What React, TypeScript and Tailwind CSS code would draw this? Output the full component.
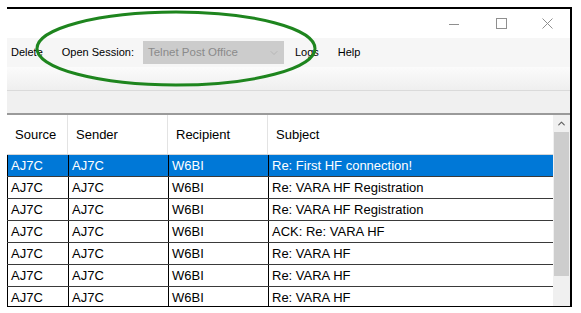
import React from 'react';
import { ChevronDown, ChevronUp } from 'lucide-react';

const rows = [
  { source: 'AJ7C', sender: 'AJ7C', recipient: 'W6BI', subject: 'Re: First HF connection!', selected: true },
  { source: 'AJ7C', sender: 'AJ7C', recipient: 'W6BI', subject: 'Re: VARA HF Registration' },
  { source: 'AJ7C', sender: 'AJ7C', recipient: 'W6BI', subject: 'Re: VARA HF Registration' },
  { source: 'AJ7C', sender: 'AJ7C', recipient: 'W6BI', subject: 'ACK: Re: VARA HF' },
  { source: 'AJ7C', sender: 'AJ7C', recipient: 'W6BI', subject: 'Re: VARA HF' },
  { source: 'AJ7C', sender: 'AJ7C', recipient: 'W6BI', subject: 'Re: VARA HF' },
  { source: 'AJ7C', sender: 'AJ7C', recipient: 'W6BI', subject: 'Re: VARA HF' },
];

const cols = ['w-[61px]', 'w-[100px]', 'w-[100px]', 'w-[285px]'];

export default function App() {
  return (
    <div className="relative w-[581px] h-[313px] bg-white overflow-hidden font-['Liberation_Sans',Arial,sans-serif]">
      <div className="ml-[7px] mt-[7px] w-[565px] h-[300px] border-t-2 border-r-2 border-b border-black flex flex-col">
        {/* title bar */}
        <div className="h-[29px] shrink-0 bg-white flex items-center justify-end">
          <div className="w-[10px] h-px bg-[#8f8f8f] mr-[37px] mt-[1px]" />
          <div className="w-[11px] h-[11px] border border-[#8f8f8f] mr-[35px]" />
          <svg width="11" height="11" viewBox="0 0 11 11" className="mr-[17px]">
            <path d="M0.5 0.5 L10.5 10.5 M10.5 0.5 L0.5 10.5" stroke="#8f8f8f" strokeWidth="1" />
          </svg>
        </div>

        {/* menu bar */}
        <div className="h-[29px] shrink-0 bg-[#f6f6f6] flex items-center text-[11px] text-black">
          <span className="ml-[4px]">Delete</span>
          <span className="ml-[19px]">Open Session:</span>
          <div className="ml-[9px] w-[141px] h-[23px] bg-[#cccccc] flex items-center justify-between pl-[5px] pr-[4px] text-[#8a8a8a] text-[11.5px]">
            <span>Telnet Post Office</span>
            <ChevronDown size={12} strokeWidth={1.25} className="text-[#a9a9a9]" />
          </div>
          <span className="ml-[11px]">Logs</span>
          <span className="ml-[19px]">Help</span>
        </div>

        {/* toolbar */}
        <div className="h-[24px] shrink-0 bg-gradient-to-b from-[#fbfbfb] to-[#efefef] border-b border-[#dadada]" />

        {/* strip */}
        <div className="h-[24px] shrink-0 bg-[#f0f0f0] border-b-2 border-[#9a9a9a]" />

        {/* list */}
        <div className="flex-1 flex overflow-hidden">
          <div className="w-[546px] flex flex-col text-[13px]">
            <div className="h-[40px] shrink-0 flex border-b border-[#d6d6d6] bg-white text-black">
              {['Source', 'Sender', 'Recipient', 'Subject'].map((h, i) => (
                <div key={h} className={`${cols[i]} shrink-0 flex items-center pl-[8px] ${i < 3 ? 'border-r border-[#e3e3e3]' : ''}`}>
                  {h}
                </div>
              ))}
            </div>
            {rows.map((r, idx) => (
              <div
                key={idx}
                className={`h-[22px] shrink-0 flex border-b border-[#3a3a3a] ${r.selected ? 'bg-[#0078d7] text-white' : 'bg-white text-black'}`}
              >
                {[r.source, r.sender, r.recipient, r.subject].map((v, i) => (
                  <div key={i} className={`${cols[i]} shrink-0 flex items-center pl-[3px] border-l border-black`}>
                    {v}
                  </div>
                ))}
              </div>
            ))}
          </div>
          <div className="w-[17px] shrink-0 bg-[#f0f0f0] flex flex-col items-center">
            <div className="h-[17px] flex items-center justify-center">
              <ChevronUp size={11} strokeWidth={2.5} className="text-[#606060]" />
            </div>
            <div className="w-[15px] h-[144px] bg-[#cdcdcd]" />
          </div>
        </div>
      </div>

      {/* annotation */}
      <svg className="absolute left-0 top-0 pointer-events-none" width="581" height="313">
        <ellipse cx="176" cy="48.5" rx="139" ry="36.5" fill="none" stroke="#1e851e" strokeWidth="3" />
      </svg>
    </div>
  );
}
